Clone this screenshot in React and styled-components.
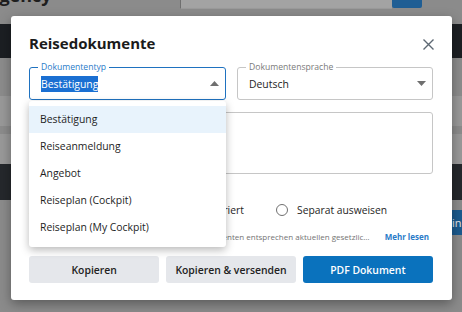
import React from 'react'
import styled, { createGlobalStyle } from 'styled-components';

const GlobalStyle = createGlobalStyle`
  html, body { margin: 0; padding: 0; }
  body {
    font-family: "Open Sans", "Liberation Sans", sans-serif;
    background: #8b8b8b;
  }
`;

const docTypes = [
  'Bestätigung',
  'Reiseanmeldung',
  'Angebot',
  'Reiseplan (Cockpit)',
  'Reiseplan (My Cockpit)',
];

function Arrow({ up }) {
  return (
    <ArrowSvg width="9" height="5" viewBox="0 0 9 5">
      {up ? <path d="M0 5 L4.5 0 L9 5 Z" fill="#6f6f6f" /> : <path d="M0 0 L4.5 5 L9 0 Z" fill="#6f6f6f" />}
    </ArrowSvg>
  );
}

export default function App() {
  return (
    <Page>
      <GlobalStyle />
      <TopBar>
        <Logo>Agency</Logo>
        <Search />
        <SearchButton />
      </TopBar>
      <Nav />
      <Band $tone="#8c8c8c" $h={38} />
      <Band $tone="#999999" $h={30} />
      <Band $tone="#8c8c8c" $h={8} />
      <Band $tone="#999999" $h={30} />
      <Band $tone="#25282c" $h={36} />
      <Band $tone="#8c8c8c" $h={10} />
      <ActionRow>
        <BgButton>Mein Konto</BgButton>
      </ActionRow>

      <Modal>
        <Header>
          <Title>Reisedokumente</Title>
          <Close aria-label="close">
            <svg width="11" height="11" viewBox="0 0 11 11">
              <path d="M0.5 0.5 L10.5 10.5 M10.5 0.5 L0.5 10.5" stroke="#5d6873" strokeWidth="1.4" />
            </svg>
          </Close>
        </Header>

        <Fields>
          <Field $active>
            <Legend $active>Dokumententyp</Legend>
            <Value><Selected>Bestätigung</Selected></Value>
            <Arrow up />
          </Field>
          <Field>
            <Legend>Dokumentensprache</Legend>
            <Value>Deutsch</Value>
            <Arrow />
          </Field>
        </Fields>

        <TextArea>
          <Legend>Bemerkung</Legend>
        </TextArea>

        <RadioRow>
          <RadioLabel>Servicegebühr</RadioLabel>
          <Option>
            <Radio />
            <span>Im Preis integriert</span>
          </Option>
          <Option>
            <Radio />
            <span>Separat ausweisen</span>
          </Option>
        </RadioRow>

        <InfoLine>
          <InfoText>Bitte beachten Sie: Alle Angaben in den Reisedokumenten entsprechen aktuellen gesetzlichen Vorgaben.</InfoText>
          <More>Mehr lesen</More>
        </InfoLine>

        <Buttons>
          <Button>Kopieren</Button>
          <Button>Kopieren &amp; versenden</Button>
          <Button $primary>PDF Dokument</Button>
        </Buttons>

        <Menu>
          {docTypes.map((t, i) => (
            <MenuItem key={t} $active={i === 0}>{t}</MenuItem>
          ))}
        </Menu>
      </Modal>
    </Page>
  )
}

const Page = styled.div`
  position: relative;
  width: 462px;
  height: 312px;
  overflow: hidden;
  background: #8b8b8b;
`;

const TopBar = styled.div`
  height: 24px;
  display: flex;
  align-items: flex-start;
  background: #8b8b8b;
`;

const Logo = styled.div`
  margin: -17px 0 0 -13px;
  font-size: 18px;
  font-weight: 700;
  color: #1e1e1e;
  width: 193px;
`;

const Search = styled.div`
  width: 211px;
  height: 8px;
  background: #a3a3a3;
  border-left: 1px solid #6f6f6f;
  border-bottom: 1px solid #9a9a9a;
`;

const SearchButton = styled.div`
  width: 30px;
  height: 8px;
  background: #1f5e94;
  border-radius: 0 0 2px 2px;
`;

const Nav = styled.div`
  height: 34px;
  background: #1c1f23;
`;

const Band = styled.div`
  height: ${p => p.$h}px;
  background: ${p => p.$tone};
`;

const ActionRow = styled.div`
  display: flex;
  justify-content: flex-end;
`;

const BgButton = styled.div`
  height: 25px;
  line-height: 25px;
  background: #1b5a8e;
  color: #e8e8e8;
  font-size: 11px;
  padding: 0 4px;
  white-space: nowrap;
  width: 14px;
  overflow: hidden;
  text-indent: -8px;
`;

const Modal = styled.div`
  position: absolute;
  left: 11px;
  top: 16px;
  width: 441px;
  height: 284px;
  box-sizing: border-box;
  padding: 16px 19px 17px 18px;
  background: #fff;
  border-radius: 3px;
  box-shadow: 0 4px 12px rgba(0, 0, 0, 0.35);
  display: flex;
  flex-direction: column;
`;

const Header = styled.div`
  display: flex;
  align-items: center;
  justify-content: space-between;
  height: 22px;
`;

const Title = styled.h2`
  margin: 0;
  font-size: 15px;
  line-height: 22px;
  font-weight: 700;
  color: #1b1b1b;
`;

const Close = styled.div`
  display: flex;
  margin: 2px -1px 0 0;
`;

const Fields = styled.div`
  margin-top: 13px;
  display: grid;
  grid-template-columns: 197px 196px;
  justify-content: space-between;
`;

const Field = styled.div`
  position: relative;
  height: 33px;
  box-sizing: border-box;
  border: 1px solid ${p => (p.$active ? '#1f72c0' : '#c6c6c6')};
  border-radius: 3px;
  display: flex;
  align-items: center;
  justify-content: space-between;
  padding: 0 6px 0 11px;
`;

const Legend = styled.span`
  position: absolute;
  top: -7px;
  left: 8px;
  padding: 0 3px;
  background: #fff;
  font-size: 8.6px;
  line-height: 12px;
  color: ${p => (p.$active ? '#2a7bc8' : '#7a7a7a')};
`;

const Value = styled.div`
  font-size: 10.4px;
  color: #1e1e1e;
`;

const Selected = styled.span`
  background: #1a6fd2;
  color: #fff;
  padding: 1px 0;
`;

const ArrowSvg = styled.svg`
  display: block;
`;

const TextArea = styled.div`
  position: relative;
  margin-top: 12px;
  height: 62px;
  box-sizing: border-box;
  border: 1px solid #c6c6c6;
  border-radius: 3px;
`;

const RadioRow = styled.div`
  margin-top: 26px;
  height: 20px;
  display: grid;
  grid-template-columns: 108px 139px auto;
  align-items: center;
  font-size: 10.3px;
  color: #1e1e1e;
`;

const RadioLabel = styled.span``;

const Option = styled.label`
  display: flex;
  align-items: center;
  gap: 9px;
`;

const Radio = styled.span`
  width: 10px;
  height: 10px;
  border: 1px solid #707070;
  border-radius: 50%;
  background: #fff;
`;

const InfoLine = styled.div`
  margin-top: 10px;
  display: flex;
  align-items: center;
  gap: 12px;
  padding-right: 4px;
  font-size: 8px;
  line-height: 13px;
`;

const InfoText = styled.span`
  flex: 1;
  min-width: 0;
  color: #747474;
  white-space: nowrap;
  overflow: hidden;
  text-overflow: ellipsis;
`;

const More = styled.span`
  color: #2a7bc8;
  font-weight: 700;
  white-space: nowrap;
`;

const Buttons = styled.div`
  margin-top: auto;
  display: grid;
  grid-template-columns: repeat(3, 1fr);
  gap: 6.5px;
`;

const Button = styled.button`
  height: 27px;
  border: none;
  border-radius: 3px;
  font-family: inherit;
  font-size: 10.4px;
  font-weight: 600;
  color: ${p => (p.$primary ? '#fff' : '#222')};
  background: ${p => (p.$primary ? '#0a72bd' : '#e5e7eb')};
  padding: 0;
`;

const Menu = styled.div`
  position: absolute;
  left: 18px;
  top: 85px;
  width: 197px;
  padding: 5px 0 6px;
  background: #fff;
  border-radius: 3px;
  box-shadow: 0 3px 9px rgba(0, 0, 0, 0.28);
`;

const MenuItem = styled.div`
  height: 27px;
  line-height: 27px;
  padding-left: 11px;
  font-size: 10.4px;
  color: #1e1e1e;
  background: ${p => (p.$active ? '#e8f3fc' : 'transparent')};
`;
